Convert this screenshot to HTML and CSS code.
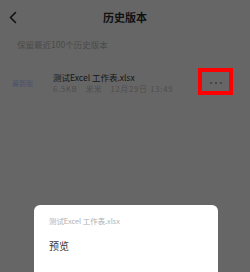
FILE: index.html
```html
<!DOCTYPE html>
<html lang="zh">
<head>
<meta charset="utf-8">
<link rel="stylesheet" href="styles.css">
</head>
<body>
<div class="page">
  <header class="header">
    <span class="back">
      <svg width="10" height="14" viewBox="0 0 10 14"><path d="M6.5 1.5 L1.5 6.5 L6.5 11.5" fill="none" stroke="#111" stroke-width="1.6" stroke-linecap="round" stroke-linejoin="round"/></svg>
    </span>
    <h1 class="title">历史版本</h1>
    <span></span>
  </header>
  <p class="hint">保留最近100个历史版本</p>
  <div class="row">
    <span class="tag">最新版</span>
    <div class="info">
      <div class="name">测试Excel 工作表.xlsx</div>
      <div class="meta"><span>6.5KB</span><span>米米</span><span>12月29日 13:49</span></div>
    </div>
    <span class="more">
      <svg width="14" height="4" viewBox="0 0 14 4"><circle cx="2" cy="2" r="1" fill="#3c3c3c"/><circle cx="7" cy="2" r="1" fill="#3c3c3c"/><circle cx="12" cy="2" r="1" fill="#3c3c3c"/></svg>
    </span>
  </div>
</div>
<div class="sheet">
  <div class="sheet-title">测试Excel 工作表.xlsx</div>
  <div class="sheet-item">预览</div>
</div>
</body>
</html>
```
FILE: styles.css
```css
* { box-sizing: border-box; }
html, body { margin: 0; padding: 0; }
body {
  width: 250px;
  height: 272px;
  overflow: hidden;
  position: relative;
  background: #666666;
  font-family: "Noto Sans CJK SC", "Noto Sans", sans-serif;
}
.header {
  height: 34px;
  display: grid;
  grid-template-columns: 40px 1fr 40px;
  align-items: center;
}
.back {
  display: flex;
  padding-left: 9px;
  padding-top: 1px;
}
.title {
  margin: 0;
  text-align: center;
  font-size: 11px;
  font-weight: 700;
  line-height: 14px;
  color: #111;
}
.hint {
  margin: 0;
  padding: 5px 0 0 17px;
  font-size: 8.5px;
  line-height: 11px;
  color: #4a4a4a;
}
.row {
  margin-top: 18px;
  display: flex;
  align-items: flex-start;
  padding-left: 12px;
  padding-right: 17px;
}
.tag {
  width: 41px;
  margin-top: 10px;
  font-size: 7px;
  line-height: 10px;
  color: #4b536e;
}
.info {
  margin-top: 3px;
}
.name {
  font-size: 8.5px;
  line-height: 12px;
  color: #151515;
}
.meta {
  margin-top: 1px;
  display: flex;
  gap: 8px;
  font-size: 7.5px;
  letter-spacing: 0.9px;
  line-height: 10px;
  color: #4d4d4d;
}
.more {
  margin-left: auto;
  width: 35px;
  height: 27px;
  border: 4px solid #ff0000;
  display: flex;
  align-items: center;
  justify-content: center;
  padding-top: 3px;
}
.sheet {
  position: absolute;
  left: 34px;
  top: 205px;
  width: 184px;
  bottom: 0;
  background: #fff;
  border-radius: 6px 6px 0 0;
  padding: 11px 15px 0;
}
.sheet-title {
  font-size: 7.4px;
  line-height: 10px;
  color: #b0b0b0;
}
.sheet-item {
  margin-top: 12.5px;
  font-size: 10px;
  line-height: 14px;
  color: #333;
}
```
